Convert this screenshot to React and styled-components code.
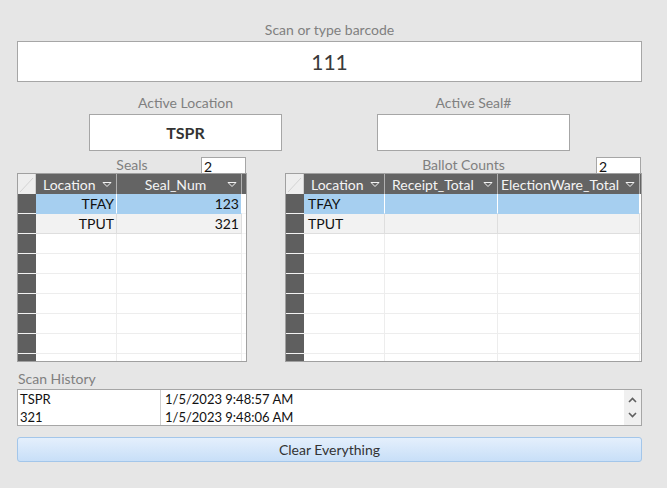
import React from 'react';
import styled, { createGlobalStyle } from 'styled-components';

const Global = createGlobalStyle`
  html, body { margin: 0; padding: 0; background: #e6e6e6; }
  body { font-family: Lato, "Open Sans", sans-serif; }
  * { box-sizing: border-box; }
`;

const Page = styled.div`
  width: 667px;
  height: 488px;
  padding: 21px 25px 0 17px;
  display: flex;
  flex-direction: column;
`;

const Label = styled.div`
  font-size: 14px;
  line-height: 18px;
  padding-bottom: 2px;
  color: #808080;
  text-align: ${(p) => p.$align || 'center'};
  padding-left: ${(p) => (p.$align === 'left' ? '1px' : '0')};
`;

const HistoryLabel = styled(Label)`
  margin-top: 7px;
  line-height: 20px;
  padding-bottom: 0;
`;

const BarcodeBox = styled.div`
  height: 41px;
  border: 1px solid #a6a6a6;
  background: #fff;
  display: flex;
  align-items: center;
  justify-content: center;
  font-size: 21px;
  color: #3a3a3a;
`;

const FieldRow = styled.div`
  display: flex;
  gap: 95px;
  padding-left: 72px;
  margin-top: 12px;
`;

const Field = styled.div`
  width: 193px;
  display: flex;
  flex-direction: column;
`;

const FieldBox = styled.div`
  height: 37px;
  border: 1px solid #a6a6a6;
  background: #fff;
  display: flex;
  align-items: center;
  justify-content: center;
  font-size: 16px;
  font-weight: 700;
  color: #333;
`;

const GridsRow = styled.div`
  display: flex;
  gap: 38px;
  margin-top: 6px;
`;

const Panel = styled.div`
  width: ${(p) => p.$w}px;
  display: flex;
  flex-direction: column;
`;

const PanelHead = styled.div`
  display: grid;
  grid-template-columns: 46px 1fr 46px;
  height: 16px;
  align-items: end;
`;

const PanelLabel = styled.div`
  grid-column: 2;
  font-size: 14px;
  line-height: 16px;
  color: #808080;
  text-align: center;
  white-space: nowrap;
`;

const CountBox = styled.div`
  grid-column: 3;
  width: 45px;
  height: 16px;
  border: 1px solid #a6a6a6;
  border-bottom: none;
  background: #fff;
  font-size: 14px;
  line-height: 17px;
  padding-left: 2px;
  color: #111;
`;

const DataGrid = styled.div`
  height: 189px;
  border: 1px solid #a0a0a0;
  background: #fff;
  overflow: hidden;
  display: grid;
  grid-template-columns: ${(p) => p.$cols};
  grid-auto-rows: 20px;
  align-content: start;
`;

const Corner = styled.div`
  background: #eeeeee;
  border-right: 1px solid #d0d0d0;
  display: flex;
  align-items: flex-end;
  justify-content: flex-end;
`;

const HeadCell = styled.div`
  background: #646464;
  color: #f4f4f4;
  font-size: 14px;
  display: flex;
  align-items: center;
  padding: 0 4px 0 ${(p) => p.$pl ?? 7}px;
  border-right: 1px solid #b0b0b0;
  white-space: nowrap;
  overflow: hidden;
`;

const HeadText = styled.span`
  flex: 1;
  text-align: ${(p) => p.$align || 'left'};
`;

const Selector = styled.div`
  background: #5f5f5f;
  border-bottom: 1px solid #f2f2f2;
`;

const Cell = styled.div`
  background: ${(p) => (p.$sel ? '#a6cff0' : p.$alt ? '#f2f2f2' : '#fff')};
  border-right: 1px solid ${(p) => (p.$sel ? '#ffffff' : p.$alt ? '#dedede' : '#ededed')};
  border-bottom: 1px solid ${(p) => (p.$sel ? '#a6cff0' : p.$alt ? '#dedede' : '#ededed')};
  font-size: 14px;
  color: #111;
  display: flex;
  align-items: center;
  justify-content: ${(p) => (p.$right ? 'flex-end' : 'flex-start')};
  padding: 0 ${(p) => (p.$right ? '2px' : '0')} 0 ${(p) => (p.$right ? '0' : '4px')};
  white-space: nowrap;
`;

const Filler = styled.div`
  background: ${(p) => (p.$head ? '#646464' : '#fff')};
  border-bottom: 1px solid ${(p) => (p.$head ? '#646464' : '#f4f4f4')};
`;

const HistoryList = styled.div`
  height: 37px;
  border: 1px solid #a6a6a6;
  background: #fff;
  display: flex;
  overflow: hidden;
`;

const HistoryBody = styled.div`
  flex: 1;
  display: grid;
  grid-template-columns: 143px 1fr;
  grid-auto-rows: 18px;
  align-content: start;
`;

const HistCell = styled.div`
  font-size: 13px;
  line-height: 18px;
  color: #111;
  padding-left: ${(p) => (p.$first ? '2px' : '4px')};
  border-right: ${(p) => (p.$first ? '1px solid #cfcfcf' : 'none')};
  white-space: nowrap;
`;

const ScrollBar = styled.div`
  width: 17px;
  background: #f0f0f0;
  display: flex;
  flex-direction: column;
  align-items: center;
  justify-content: space-around;
  padding: 2px 0;
`;

const ClearButton = styled.button`
  margin-top: 11px;
  height: 25px;
  width: 100%;
  border: 1px solid #a3c6ea;
  border-radius: 3px;
  background: linear-gradient(#e4effc, #c8dff8);
  font-family: Lato, "Open Sans", sans-serif;
  font-size: 14px;
  color: #333;
  padding: 0;
`;

const FilterArrow = () => (
  <svg width="10" height="7" viewBox="0 0 10 7">
    <polygon points="1,1.5 9,1.5 5,5.5" fill="none" stroke="#f4f4f4" strokeWidth="1" />
  </svg>
);

const CornerMark = () => (
  <svg width="17" height="19" viewBox="0 0 17 19">
    <line x1="2" y1="17" x2="15" y2="3" stroke="#d4d4d4" strokeWidth="1" />
  </svg>
);

const Chevron = ({ up }) => (
  <svg width="9" height="6" viewBox="0 0 9 6">
    <polyline
      points={up ? '1,5 4.5,1.5 8,5' : '1,1 4.5,4.5 8,1'}
      fill="none"
      stroke="#606060"
      strokeWidth="1.6"
    />
  </svg>
);

const Table = ({ cols, headers, rows, total = 9 }) => {
  const blank = Array.from({ length: total - rows.length }, () => null);
  const all = [...rows, ...blank];
  return (
    <DataGrid $cols={cols}>
      <Corner>
        <CornerMark />
      </Corner>
      {headers.map((h) => (
        <HeadCell key={h.label} $pl={h.pl}>
          <HeadText $align={h.align}>{h.label}</HeadText>
          <FilterArrow />
        </HeadCell>
      ))}
      <Filler $head />
      {all.map((r, i) => (
        <React.Fragment key={i}>
          <Selector />
          {headers.map((h, j) => (
            <Cell key={j} $sel={i === 0 && r} $alt={i === 1 && r} $right={h.right}>
              {r ? r[j] : ''}
            </Cell>
          ))}
          <Filler />
        </React.Fragment>
      ))}
    </DataGrid>
  );
};

export default function App() {
  return (
    <>
      <Global />
      <Page>
        <Label>Scan or type barcode</Label>
        <BarcodeBox>111</BarcodeBox>

        <FieldRow>
          <Field>
            <Label>Active Location</Label>
            <FieldBox>TSPR</FieldBox>
          </Field>
          <Field>
            <Label>Active Seal#</Label>
            <FieldBox />
          </Field>
        </FieldRow>

        <GridsRow>
          <Panel $w={230}>
            <PanelHead>
              <PanelLabel>Seals</PanelLabel>
              <CountBox>2</CountBox>
            </PanelHead>
            <Table
              cols="18px 81px 125px 1fr"
              headers={[
                { label: 'Location', right: true },
                { label: 'Seal_Num', align: 'center', right: true },
              ]}
              rows={[
                ['TFAY', '123'],
                ['TPUT', '321'],
              ]}
            />
          </Panel>
          <Panel $w={357}>
            <PanelHead>
              <PanelLabel>Ballot Counts</PanelLabel>
              <CountBox>2</CountBox>
            </PanelHead>
            <Table
              cols="18px 81px 113px 142px 1fr"
              headers={[
                { label: 'Location' },
                { label: 'Receipt_Total' },
                { label: 'ElectionWare_Total', pl: 3 },
              ]}
              rows={[
                ['TFAY', '', ''],
                ['TPUT', '', ''],
              ]}
            />
          </Panel>
        </GridsRow>

        <HistoryLabel $align="left">Scan History</HistoryLabel>
        <HistoryList>
          <HistoryBody>
            <HistCell $first>TSPR</HistCell>
            <HistCell>1/5/2023 9:48:57 AM</HistCell>
            <HistCell $first>321</HistCell>
            <HistCell>1/5/2023 9:48:06 AM</HistCell>
          </HistoryBody>
          <ScrollBar>
            <Chevron up />
            <Chevron />
          </ScrollBar>
        </HistoryList>
        <ClearButton>Clear Everything</ClearButton>
      </Page>
    </>
  );
}
